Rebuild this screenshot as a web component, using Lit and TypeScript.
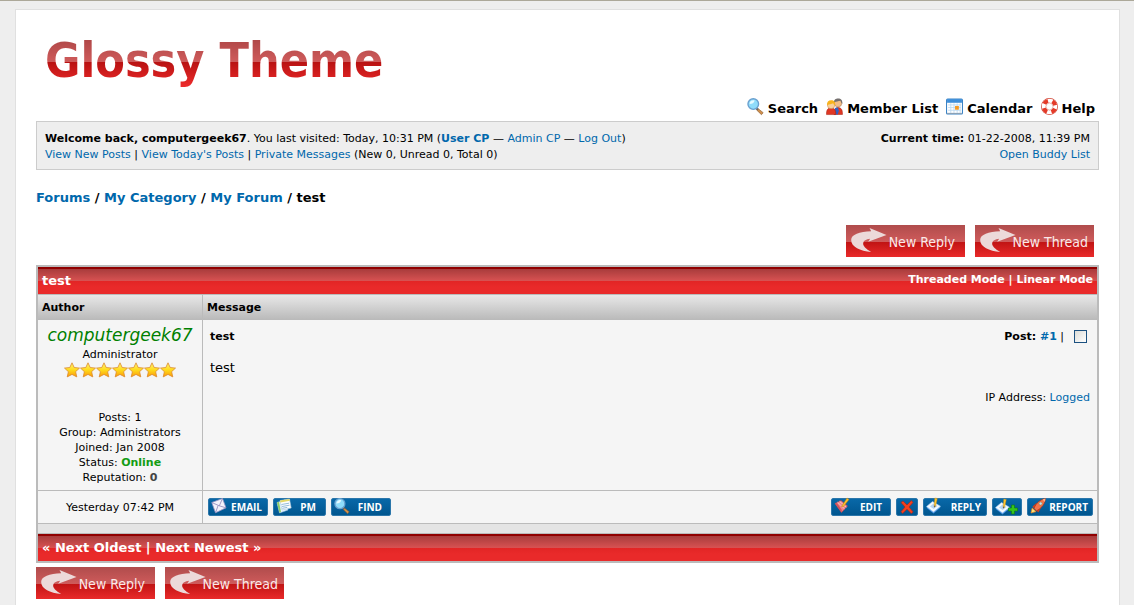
import { LitElement, html, css, svg } from "lit";
import { customElement, property } from "lit/decorators.js";

const lens = svg`
  <path d="M10 9.6l5.200 4.200-1.600 1.900L8.800 11z" fill="#d0904c" stroke="#8c5a2c" stroke-width=".6"/>
  <path d="M9 9l2 1.400-1.200 1.400L8.100 10.200z" fill="#666"/>
  <circle cx="5.900" cy="5.700" r="5" fill="#8fdcfa" stroke="#6aa0cf" stroke-width="1.300"/>
  <path d="M2.400 5.600a3.500 3.500 0 0 1 4.800-3.300c-.6 2.200-2 3.300-4.800 3.300z" fill="#e6faff"/>`;

const notepad = svg`
  <path d="M.5 9.800L6.500 4l8 5.500-7 6z" fill="#4a94e4"/>
  <path d="M.5 8.600L6.500 3.500l8 4.800-7 5.700z" fill="#f4faff" stroke="#9cc8f4" stroke-width=".6"/>
  <path d="M4 8.500l3.500-3 4 2.600-3.800 3z" fill="#b4d4f6"/>
  <path d="M8 9.200L8.800 0l2.500.5-1.800 8z" fill="#fcc52c" stroke="#c98a14" stroke-width=".4"/>
  <path d="M8 9.400l.2-2 1.300.6z" fill="#3b4d6b"/>`;

const icons: Record<string, unknown> = {
  search: lens,
  find: lens,
  members: svg`
    <path d="M7.500 15.500c-.2-4.500.9-6.500 3.700-6.500 3.200 0 4.300 2 4.300 6.500z" fill="#e03824" stroke="#a91e10" stroke-width=".5"/>
    <path d="M8.300 9.500l3-.5.8 3-1 3.500H9z" fill="#2f62c6"/>
    <circle cx="11.300" cy="4.800" r="3.600" fill="#f3bd86" stroke="#8d6039" stroke-width=".4"/>
    <path d="M7.400 4.600C7.400 1.500 9 .4 11.500.4s4.200 1.500 3.900 5c-1-.3-1.400-1.700-1.700-2.700-2 .6-4.200.4-6.300 1.900z" fill="#74706f"/>
    <path d="M.5 15.600C.3 11.300 1.500 9.500 4.700 9.500s4.600 1.800 4.500 6.100z" fill="#e03824" stroke="#a91e10" stroke-width=".5"/>
    <circle cx="4.800" cy="6.600" r="3.500" fill="#fbd09b" stroke="#b57a3c" stroke-width=".4"/>
    <path d="M1 7C.7 3.600 2.200 2 4.900 2s4 1.400 3.600 4.800c-1-.3-1.400-1.100-1.600-1.900C5.100 6 3 5.300 1 7z" fill="#f7b31d"/>`,
  calendar: svg`
    <rect x=".5" y="1" width="15" height="14" rx="1" fill="#fff" stroke="#3b83c5"/>
    <rect x="1" y="1" width="14" height="3.500" fill="#3d8ed9"/>
    <path d="M2 6.500h12M2 9h12M2 11.500h12M4.500 5v9M7.500 5v9M10.500 5v9M13.300 5v9" stroke="#b9d9f2" stroke-width=".8"/>
    <rect x="8.500" y="7.500" width="3.600" height="3.500" fill="#f59a22"/>
    <path d="M1 14.500h14" stroke="#8a9fb2"/>`,
  help: svg`
    <circle cx="8" cy="8" r="5.500" fill="none" stroke="#d2493a" stroke-width="5"/>
    <circle cx="8" cy="8" r="5.400" fill="none" stroke="#fff" stroke-width="3.800"/>
    <circle cx="8" cy="8" r="5.400" fill="none" stroke="#e43a28" stroke-width="4" stroke-dasharray="4.240 4.240" stroke-dashoffset="-2.120"/>
    <circle cx="8" cy="8" r="3.200" fill="#fff" stroke="#e5a79e" stroke-width=".6"/>`,
  email: svg`
    <path d="M.8 4.500L11.500.5l3.500 9.300L4.500 14.800z" fill="#f4f2fb" stroke="#9a96c4" stroke-width=".8"/>
    <path d="M.8 4.500l7.500 3.300L11.500.5M4.500 14.800l2.600-7.300M15 9.800L8.300 7.800" fill="none" stroke="#8a84b8" stroke-width=".8"/>`,
  pm: svg`
    <path d="M1 4.500l8-2.500 3 10-8.500 3z" fill="#e6f4ff" stroke="#9cc3e6" stroke-width=".6"/>
    <path d="M4 2.500L13.500 1l1.700 9L6 12z" fill="#fdfefe" stroke="#a9c7de" stroke-width=".6"/>
    <path d="M4 2.500L13.500 1l.3 1.800-9.400 1.800z" fill="#e4d765"/>
    <path d="M5.500 6.500l7.500-1.300M6 8.500l7.500-1.300M6.300 10.300l5-.9" stroke="#7aa9cf" stroke-width=".8"/>
    <path d="M1 4.500l2-.7 2 10-1.500 1z" fill="#8ecb63"/>`,
  edit: svg`
    <path d="M1 5.500l6-3 6.500 5.500-6 6.500z" fill="#f0838a" stroke="#b23c46" stroke-width=".6"/>
    <path d="M3.500 4.300l7 6.500M5.500 3.300l6.800 6" stroke="#f8c3c3"/>
    <path d="M1 5.500l6.500 9 .3-2.500L3 5z" fill="#d2525c"/>
    <path d="M7.500 8.500L13 0l2 1.500L9.300 8.700z" fill="#fcc22b" stroke="#b7770f" stroke-width=".5"/>`,
  remove: svg`<path d="M2 3.600L4 2l4 4 4.400-4.400L14 3.400 10 8l4.200 5-2 1.600L8 10.200 3.600 14.600 2 12.700 6 8z" fill="#f4401e" stroke="#a72414" stroke-width=".6"/>`,
  reply: notepad,
  quick: svg`${notepad}<path d="M13.500 9h3V6h3v3h3v3h-3v3h-3v-3h-3z" fill="#34c41c" stroke="#137a0c" stroke-width=".6"/>`,
  report: svg`
    <path d="M1 15l1.200-5 3.800 3.600z" fill="#ffe27a" stroke="#f48a1c" stroke-width=".7"/>
    <path d="M2.500 8.500L6.500 5l4.700 4.500-2.700 4.800-2-1.300-3-3.300z" fill="#d3411e"/>
    <path d="M4 10.500C6 5 10 1.500 15.500.5c-.4 5.500-4 9.800-9 12.300z" fill="#f4734a" stroke="#9a2b14" stroke-width=".6"/>
    <path d="M12.500 1.500l3-1-.6 3.400z" fill="#ffb68d"/>
    <circle cx="10.600" cy="5.600" r="1.500" fill="#bfe4ff" stroke="#884" stroke-width=".5"/>`,
};

@customElement("forum-icon")
class ForumIcon extends LitElement {
  @property() name = "";
  static styles = css`
    :host { display: block; flex: none; height: 17px; }
    svg { display: block; height: 100%; overflow: visible; }
  `;
  render() {
    const w = this.name === "quick" ? 23 : 16;
    return html`<svg viewBox="0 0 ${w} 16" aria-hidden="true">${icons[this.name]}</svg>`;
  }
}

@customElement("thread-buttons")
class ThreadButtons extends LitElement {
  static styles = css`
    :host { display: flex; gap: 10px; }
    button {
      display: flex; align-items: center; justify-content: space-between;
      width: 119px; height: 32px; padding: 0 6px 0 5px; border: 0; border-radius: 0;
      background: linear-gradient(#b04c4c, #cf5b5b 17px, #c01414 17px, #e92a2a);
      color: #fbe9e9; cursor: pointer;
      font: 14px/20px "DejaVu Sans Condensed", "DejaVu Sans", sans-serif;
      font-stretch: condensed;
    }
    button.reply { padding-right: 10px; }
    svg { width: 36px; height: 24px; flex: none; margin-right: -4px; margin-bottom: 2px; }
    span { padding-top: 2px; white-space: nowrap; }
  `;
  render() {
    const arrow = html`<svg viewBox="15 8 107 72" aria-hidden="true">
      <path fill="#ecd9d9" d="M121 29L70 8l5 10C40 19 15 28 15 44c0 21 27 33 60 36C59 71 50 62 51 54c1-8 9-13 21-14l-6 9z"/></svg>`;
    return html`
      <button type="button" class="reply">${arrow}<span>New Reply</span></button>
      <button type="button">${arrow}<span>New Thread</span></button>`;
  }
}

@customElement("app-root")
class AppRoot extends LitElement {
  static styles = css`
    :host {
      display: block; box-sizing: border-box; min-height: 100vh; overflow: hidden;
      border-top: 1px solid #aca899; background: #eee; color: #000;
      padding: 8px 14px 0 15px;
      font: 11px/16px Verdana, "DejaVu Sans", sans-serif;
    }
    * { box-sizing: border-box; }
    a { color: #0068ac; text-decoration: none; }
    h1, h2, p { margin: 0; font-size: inherit; }
    .page { min-height: calc(100vh - 9px); border: 1px solid #e0e0e0; background: #fff; padding: 20px; }
    .logo {
      width: max-content; margin-left: 7px; padding: 0 2px;
      font: bold 48px/60px "DejaVu Sans Condensed", "DejaVu Sans", sans-serif;
      font-stretch: condensed;
      background: linear-gradient(#b04848 10px, #cf5b5b 32px, #b81212 32px, #f02c2c 58px);
      -webkit-background-clip: text; background-clip: text; color: transparent;
    }
    .menu { display: flex; justify-content: flex-end; gap: 8px; padding: 8px 4px 2px 0; font: bold 13px/21px Verdana, "DejaVu Sans", sans-serif; }
    .menu a { display: flex; gap: 4px; color: #000; }
    .welcome { display: flex; justify-content: space-between; padding: 9px 8px 6px; border: 1px solid #ccc; background: #eee; }
    .right { text-align: right; }
    .crumbs { margin: 20px 0 19px; font: bold 13px/16px Verdana, "DejaVu Sans", sans-serif; }
    .top-buttons { display: flex; justify-content: flex-end; padding: 0 5px 8px 0; }
    table { width: 100%; border: 2px solid #bbb; border-spacing: 0; background: #f5f5f5; }
    td, th { padding: 0; text-align: left; }
    .bar {
      display: flex; justify-content: space-between; height: 27px; padding: 0 4px;
      border-top: 2px solid #900000; color: #fff; font-weight: bold; line-height: 21px;
      background: linear-gradient(#a83c3c, #d85252 12px, #e22525 12px, #e92a2a 18px);
    }
    .bar a { color: #fff; }
    .bar .large { font-size: 13px; line-height: 23px; }
    .heads th { height: 26px; padding: 0 4px; border-top: 1px solid #bbb; background: linear-gradient(#e8e8e8, #b9b9b9); }
    .heads th:first-child, .author, .date { width: 165px; border-right: 1px solid #bbb; }
    .author { height: 170px; vertical-align: top; text-align: center; padding: 3px 4px 0; line-height: 15px; }
    .name { display: block; color: #008000; font-size: 17px; font-style: italic; line-height: 24px; white-space: nowrap; }
    .stars { display: flex; justify-content: center; }
    .stars svg { width: 16px; height: 16px; }
    .stats { padding-top: 32px; }
    .online { color: #139c13; }
    .rep { color: #444; }
    .message { vertical-align: top; padding: 9px 7px 0; }
    .post-head { display: flex; justify-content: space-between; }
    .number { display: flex; gap: 7px; }
    input {
      appearance: none; width: 13px; height: 13px; margin: 1px 3px 0; border: 1px solid #1c5180;
      background: linear-gradient(135deg, #dcdcd7, #fff);
    }
    .body { padding-top: 15px; font-size: 13px; }
    .ip { padding-top: 14px; text-align: right; }
    .foot td { height: 33px; border-top: 1px solid #bbb; text-align: center; }
    .foot .date { padding-top: 1px; }
    .foot .tools { padding: 0 4px 0 5px; }
    .tools div, .tools span { display: flex; justify-content: space-between; gap: 5px; }
    .tool {
      display: flex; align-items: center; justify-content: space-between; width: 60px; height: 18px;
      padding: 0 5px 0 2px; border: 1px solid #2b76aa; border-radius: 2px; cursor: pointer;
      background: linear-gradient(#0868a8, #00568f); color: #fff;
      font: bold 10px/14px "Open Sans", "Noto Sans", sans-serif;
    }
    .tool forum-icon { height: 16px; margin-top: -3px; }
    .tool.pm { width: 53px; padding-right: 9px; }
    .tool.find, .tool.edit { padding-right: 8px; }
    .tool.remove { width: 22px; padding: 0 2px; }
    .tool.remove forum-icon { margin-top: 0; }
    .tool.reply { width: 64px; }
    .tool.quick { width: 30px; padding-right: 1px; }
    .tool.quick forum-icon { margin-top: 0; }
    .tool.report { width: 66px; padding-right: 4px; }
    .gap { height: 10px; border-top: 1px solid #bbb; background: #e4e4e4; }
    .last { border-top: 1px solid #bbb; }
    .bottom-buttons { padding-top: 4px; }
  `;

  private tool(name: string, label = "", title = label) {
    return html`<button type="button" class="tool ${name}" aria-label=${title}><forum-icon name=${name}></forum-icon>${label}</button>`;
  }

  render() {
    const menu = [["search", "Search"], ["members", "Member List"], ["calendar", "Calendar"], ["help", "Help"]];
    const star = html`<svg viewBox="0 0 16 16" aria-hidden="true">
      <defs><linearGradient id="g" x1="0" y1="0" x2="0" y2="1"><stop offset="0" stop-color="#fff27a"/><stop offset=".5" stop-color="#ffdc1c"/><stop offset="1" stop-color="#fb9a0c"/></linearGradient></defs>
      <path d="M8 .8l2.200 4.700 5.300.6-3.900 3.600 1.200 5.200L8 12.400l-4.800 2.500 1.200-5.200L.5 6.100l5.300-.6z" fill="url(#g)" stroke="#dc8a30" stroke-width=".8" stroke-linejoin="round"/></svg>`;
    return html`<main class="page">
      <h1 class="logo">Glossy Theme</h1>
      <nav class="menu">${menu.map(([icon, text]) => html`<a href="#"><forum-icon name=${icon}></forum-icon>${text}</a>`)}</nav>
      <section class="welcome">
        <div>
          <p><b>Welcome back, computergeek67</b>. You last visited: Today, 10:31 PM (<a href="#"><b>User CP</b></a> — <a href="#">Admin CP</a> — <a href="#">Log Out</a>)</p>
          <p><a href="#">View New Posts</a> | <a href="#">View Today's Posts</a> | <a href="#">Private Messages</a> (New 0, Unread 0, Total 0)</p>
        </div>
        <div class="right"><p><b>Current time:</b> 01-22-2008, 11:39 PM</p><p><a href="#">Open Buddy List</a></p></div>
      </section>
      <nav class="crumbs"><a href="#">Forums</a> / <a href="#">My Category</a> / <a href="#">My Forum</a> / test</nav>
      <div class="top-buttons"><thread-buttons></thread-buttons></div>
      <table>
        <thead>
          <tr><td colspan="2"><div class="bar"><h2 class="large">test</h2><span><a href="#">Threaded Mode</a> | <a href="#">Linear Mode</a></span></div></td></tr>
          <tr class="heads"><th scope="col">Author</th><th scope="col">Message</th></tr>
        </thead>
        <tbody>
          <tr>
            <td class="author">
              <a class="name" href="#">computergeek67</a>
              <div>Administrator</div>
              <div class="stars">${Array.from({ length: 7 }, () => star)}</div>
              <div class="stats">
                <div>Posts: 1</div><div>Group: Administrators</div><div>Joined: Jan 2008</div>
                <div>Status: <b class="online">Online</b></div><div>Reputation: <b class="rep">0</b></div>
              </div>
            </td>
            <td class="message">
              <div class="post-head"><b>test</b><span class="number"><span><b>Post: <a href="#">#1</a></b> |</span><input type="checkbox" aria-label="Select post #1"></span></div>
              <div class="body">test</div>
              <div class="ip">IP Address: <a href="#">Logged</a></div>
            </td>
          </tr>
          <tr class="foot">
            <td class="date">Yesterday 07:42 PM</td>
            <td class="tools"><div>
              <span>${this.tool("email", "EMAIL")}${this.tool("pm", "PM")}${this.tool("find", "FIND")}</span>
              <span>${this.tool("edit", "EDIT")}${this.tool("remove", "", "Delete")}${this.tool("reply", "REPLY")}${this.tool("quick", "", "Quote")}${this.tool("report", "REPORT")}</span>
            </div></td>
          </tr>
          <tr><td class="gap" colspan="2"></td></tr>
        </tbody>
        <tfoot><tr><td class="last" colspan="2"><div class="bar"><span class="large">« <a href="#">Next Oldest</a> | <a href="#">Next Newest</a> »</span></div></td></tr></tfoot>
      </table>
      <div class="bottom-buttons"><thread-buttons></thread-buttons></div>
    </main>`;
  }
}
